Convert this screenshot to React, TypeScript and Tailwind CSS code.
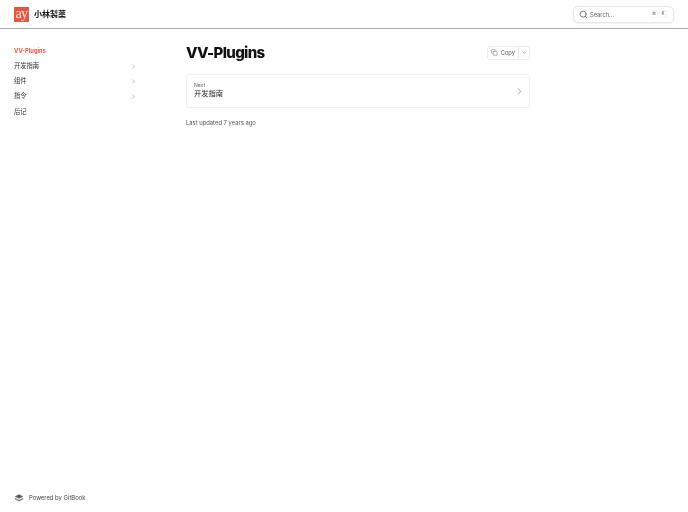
import { ChevronRight, ChevronDown, Search, Copy } from "lucide-react";

function NavItem({ label, chevron }: { label: string; chevron?: boolean }) {
  return (
    <div className="flex items-center justify-between h-[15.25px] text-[6.25px] leading-[9px] text-[#303036]">
      <span>{label}</span>
      {chevron && <ChevronRight className="w-[7px] h-[7px] text-[#77777d]" strokeWidth={1.5} />}
    </div>
  );
}

export default function App() {
  return (
    <div className="relative w-[688px] h-[512px] bg-white overflow-hidden flex flex-col will-change-transform font-['Inter','Noto_Sans_CJK_SC',sans-serif]">
      <header className="h-[29px] shrink-0 border-b border-[#a8a8a8] flex items-center justify-between pl-[14px] pr-[14px]">
        <div className="flex items-center gap-[5px]">
          <div className="w-[15px] h-[15px] bg-[#e8563f] flex items-center justify-center text-[#fde8e2] text-[14px] leading-none [font-family:'Liberation_Serif',serif] pb-[1px] tracking-[-0.5px]">
            ay
          </div>
          <span className="text-[8px] font-semibold text-[#111114]">小林製薬</span>
        </div>
        <div className="w-[101px] h-[17px] rounded-[5px] border border-[#e7e7e9] shadow-[0_1px_2px_rgba(0,0,0,0.06)] flex items-center pl-[5px] pr-[5px]">
          <Search className="w-[9px] h-[9px] text-[#44444a]" strokeWidth={1.75} />
          <span className="ml-[2px] pt-[1px] text-[5.75px] leading-[8px] text-[#66666c] flex-1">Search...</span>
          <span className="flex gap-[1px] mr-[1px]">
            <span className="w-[8px] h-[8px] rounded-[2px] border border-[#f3f3f4] flex items-center justify-center pt-[1px] text-[4.5px] text-[#55555b]">⌘</span>
            <span className="w-[8px] h-[8px] rounded-[2px] border border-[#f3f3f4] flex items-center justify-center pt-[1px] text-[4.5px] text-[#55555b]">K</span>
          </span>
        </div>
      </header>
      <div className="flex flex-1 min-h-0">
        <aside className="w-[186px] shrink-0 pl-[14px] pr-[49px] pt-[14.5px] pb-[9px] flex flex-col justify-between">
          <nav className="flex flex-col">
            <div className="flex items-center h-[15.25px] text-[5.75px] font-bold text-[#e8563f]">VV-Plugins</div>
            <NavItem label="开发指南" chevron />
            <NavItem label="组件" chevron />
            <NavItem label="指令" chevron />
            <NavItem label="后记" />
          </nav>
          <div className="flex items-center text-[5.9px] leading-[10px] text-[#44444a]">
            <svg viewBox="0 0 24 24" className="w-[10px] h-[10px]" fill="#5f5f65">
              <path d="M12 3 2 8.5l10 5.5 10-5.5L12 3Z" />
              <path d="M2 11.5v3.5l10 5.5 10-5.5v-3.5l-10 5.5-10-5.5Z" opacity="0.8" />
            </svg>
            <span className="ml-[5px] pt-[1px]">Powered by GitBook</span>
          </div>
        </aside>
        <main className="w-[344px] shrink-0 pt-[14px]">
          <div className="flex items-center justify-between h-[19px]">
            <h1 className="text-[15px] font-extrabold leading-[19px] tracking-[-0.65px] text-[#111114]">VV-Plugins</h1>
            <div className="flex items-center h-[14px] rounded-[3px] border border-[#ececee] text-[5.75px] text-[#55555b]">
              <span className="flex items-center px-[3px] pt-[0.5px] h-full border-r border-[#ececee] w-[31px]">
                <Copy className="w-[7px] h-[7px]" strokeWidth={1.5} />
                <span className="ml-[3px] pt-[1px]">Copy</span>
              </span>
              <span className="flex items-center justify-center w-[10px]">
                <ChevronDown className="w-[7px] h-[7px]" strokeWidth={1.5} />
              </span>
            </div>
          </div>
          <div className="mt-[12px] h-[34px] rounded-[3px] border border-[#f0f0f1] flex items-center justify-between pl-[7px] pr-[4px]">
            <div className="flex flex-col">
              <span className="text-[5px] leading-[5px] text-[#66666c] mt-[-1px]">Next</span>
              <span className="text-[7.25px] leading-[10px] text-[#1c1c1f] mt-[1px]">开发指南</span>
            </div>
            <ChevronRight className="w-[11px] h-[11px] text-[#66666c]" strokeWidth={1.25} />
          </div>
          <p className="mt-[11px] text-[5.85px] leading-[8px] text-[#55555b]">Last updated 7 years ago</p>
        </main>
      </div>
    </div>
  );
}
